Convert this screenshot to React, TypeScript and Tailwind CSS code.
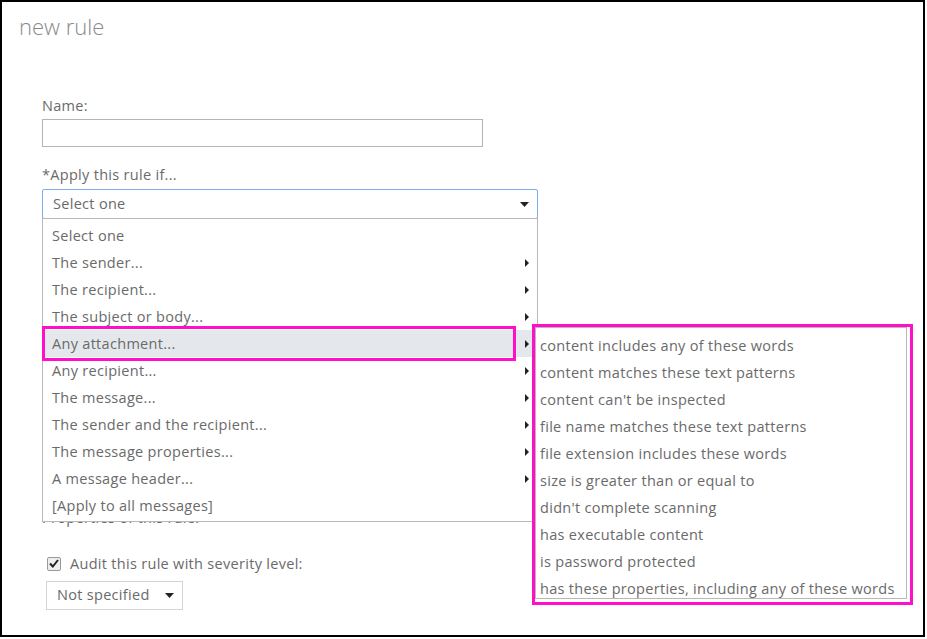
import React from "react";

const font = { fontFamily: '"Segoe UI", "Open Sans", "Noto Sans", sans-serif' };

const ruleItems = [
  { label: "Select one", sub: false },
  { label: "The sender...", sub: true },
  { label: "The recipient...", sub: true },
  { label: "The subject or body...", sub: true },
  { label: "Any attachment...", sub: true, active: true },
  { label: "Any recipient...", sub: true },
  { label: "The message...", sub: true },
  { label: "The sender and the recipient...", sub: true },
  { label: "The message properties...", sub: true },
  { label: "A message header...", sub: true },
  { label: "[Apply to all messages]", sub: false },
];

const attachmentItems = [
  "content includes any of these words",
  "content matches these text patterns",
  "content can't be inspected",
  "file name matches these text patterns",
  "file extension includes these words",
  "size is greater than or equal to",
  "didn't complete scanning",
  "has executable content",
  "is password protected",
  "has these properties, including any of these words",
];

function DownArrow() {
  return (
    <svg width="9" height="5" viewBox="0 0 9 5" className="shrink-0">
      <path d="M0 0h9L4.5 5z" fill="#222" />
    </svg>
  );
}

function RightArrow() {
  return (
    <svg width="4" height="8" viewBox="0 0 4 8" className="shrink-0">
      <path d="M0 0l4 4-4 4z" fill="#222" />
    </svg>
  );
}

export default function App() {
  return (
    <div
      className="relative w-[925px] h-[637px] border-2 border-black bg-white text-[#6a6a6a] overflow-hidden"
      style={font}
    >
      <h1 className="ml-[17px] mt-[10px] text-[22px] font-light leading-[28px] text-[#8a8a8a]">
        new rule
      </h1>

      <div className="ml-[40px] mt-[57px] w-[496px] text-[14.5px] tracking-[0.3px]">
        <label className="block leading-[18px]">Name:</label>
        <div className="mt-[4px] w-[441px] h-[28px] border border-[#b4b4b4]" />

        <label className="block mt-[19px] leading-[18px]">*Apply this rule if...</label>
        <div className="relative mt-[5px]">
          <div className="flex items-center justify-between h-[30px] pl-[10px] pr-[8px] border border-[#7eaee6] rounded-[2px]">
            <span>Select one</span>
            <DownArrow />
          </div>

          <ul className="absolute left-0 top-[29px] z-10 w-[496px] pt-[3px] pb-[2px] bg-white border border-[#b8b8b8]">
            {ruleItems.map((item) => (
              <li
                key={item.label}
                className={`flex items-center justify-between h-[27px] pl-[9px] pr-[8px] ${
                  item.active ? "bg-[#e4e8ec]" : ""
                }`}
              >
                <span>{item.label}</span>
                {item.sub && <RightArrow />}
              </li>
            ))}
          </ul>
        </div>

        <p className="mt-[290px] leading-[18px]">Properties of this rule:</p>

        <div className="flex items-center mt-[26px] ml-[5px] gap-[9px]">
          <span className="flex items-center justify-center w-[14px] h-[14px] border border-[#999] rounded-[2px] bg-[#eee]">
            <svg width="10" height="9" viewBox="0 0 10 9">
              <path d="M1 4.5l2.8 3L9 1" fill="none" stroke="#222" strokeWidth="2" />
            </svg>
          </span>
          <span>Audit this rule with severity level:</span>
        </div>

        <div className="flex items-center justify-between mt-[6px] ml-[4px] w-[137px] h-[29px] pl-[10px] pr-[8px] border border-[#d4d4d4]">
          <span>Not specified</span>
          <DownArrow />
        </div>
      </div>

      {/* annotation around the active item */}
      <div className="absolute left-[40px] top-[324px] z-20 w-[474px] h-[35px] border-[3px] border-[#ff10c8]" />

      {/* attachment submenu */}
      <div className="absolute left-[530px] top-[322px] z-20 w-[381px] h-[281px] border-[3px] border-[#ff10c8] bg-white">
        <ul className="w-[372px] h-[272px] border border-[#b8b8b8] pt-[4px] whitespace-nowrap text-[14.5px] tracking-[0.3px]">
          {attachmentItems.map((t) => (
            <li key={t} className="flex items-center h-[27px] pl-[4px]">
              {t}
            </li>
          ))}
        </ul>
      </div>
    </div>
  );
}
